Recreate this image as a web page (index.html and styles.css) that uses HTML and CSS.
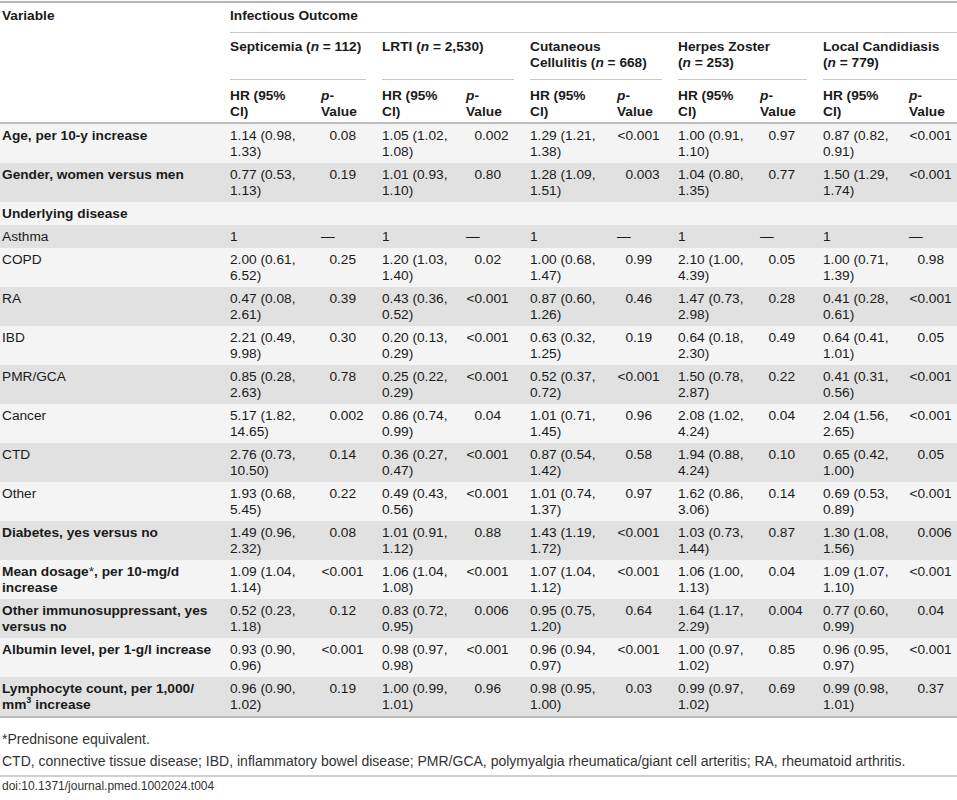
FILE: index.html
```html
<!DOCTYPE HTML>
<html>
<head>
<meta charset="utf-8">
<link rel="stylesheet" href="styles.css">
</head>
<body>

<table class="tbl">
  <colgroup>
    <col class="c-var">
    <col class="c-hr1"><col class="c-p1">
    <col class="c-hr2"><col class="c-p2">
    <col class="c-hr3"><col class="c-p3">
    <col class="c-hr4"><col class="c-p4">
    <col class="c-hr5"><col class="c-p5">
  </colgroup>
  <thead>
    <tr class="h1">
      <th class="var" rowspan="3">Variable</th>
      <th class="grp last" colspan="10">Infectious Outcome</th>
    </tr>
    <tr class="h2">
      <th class="grp" colspan="2">Septicemia (<i>n</i> = 112)</th>
      <th class="grp" colspan="2">LRTI (<i>n</i> = 2,530)</th>
      <th class="grp" colspan="2">Cutaneous<br>Cellulitis (<i>n</i> = 668)</th>
      <th class="grp" colspan="2">Herpes Zoster<br>(<i>n</i> = 253)</th>
      <th class="grp last" colspan="2">Local Candidiasis<br>(<i>n</i> = 779)</th>
    </tr>
    <tr class="h3">
      <th>HR (95%<br>CI)</th><th><i>p</i>-<br>Value</th>
      <th>HR (95%<br>CI)</th><th><i>p</i>-<br>Value</th>
      <th>HR (95%<br>CI)</th><th><i>p</i>-<br>Value</th>
      <th>HR (95%<br>CI)</th><th><i>p</i>-<br>Value</th>
      <th>HR (95%<br>CI)</th><th><i>p</i>-<br>Value</th>
    </tr>
  </thead>
  <tbody>
    <tr>
      <td class="var b">Age, per 10-y increase</td>
      <td>1.14 (0.98,<br>1.33)</td><td class="p"><span class="i">0</span>.08</td>
      <td>1.05 (1.02,<br>1.08)</td><td class="p"><span class="i">0</span>.002</td>
      <td>1.29 (1.21,<br>1.38)</td><td class="p"><span class="i">&lt;0</span>.001</td>
      <td>1.00 (0.91,<br>1.10)</td><td class="p"><span class="i">0</span>.97</td>
      <td>0.87 (0.82,<br>0.91)</td><td class="p"><span class="i">&lt;0</span>.001</td>
    </tr>
    <tr>
      <td class="var b">Gender, women versus men</td>
      <td>0.77 (0.53,<br>1.13)</td><td class="p"><span class="i">0</span>.19</td>
      <td>1.01 (0.93,<br>1.10)</td><td class="p"><span class="i">0</span>.80</td>
      <td>1.28 (1.09,<br>1.51)</td><td class="p"><span class="i">0</span>.003</td>
      <td>1.04 (0.80,<br>1.35)</td><td class="p"><span class="i">0</span>.77</td>
      <td>1.50 (1.29,<br>1.74)</td><td class="p"><span class="i">&lt;0</span>.001</td>
    </tr>
    <tr>
      <td class="var b">Underlying disease</td>
      <td></td><td></td><td></td><td></td><td></td><td></td><td></td><td></td><td></td><td></td>
    </tr>
    <tr>
      <td class="var">Asthma</td>
      <td>1</td><td class="p">—</td>
      <td>1</td><td class="p">—</td>
      <td>1</td><td class="p">—</td>
      <td>1</td><td class="p">—</td>
      <td>1</td><td class="p">—</td>
    </tr>
    <tr>
      <td class="var">COPD</td>
      <td>2.00 (0.61,<br>6.52)</td><td class="p"><span class="i">0</span>.25</td>
      <td>1.20 (1.03,<br>1.40)</td><td class="p"><span class="i">0</span>.02</td>
      <td>1.00 (0.68,<br>1.47)</td><td class="p"><span class="i">0</span>.99</td>
      <td>2.10 (1.00,<br>4.39)</td><td class="p"><span class="i">0</span>.05</td>
      <td>1.00 (0.71,<br>1.39)</td><td class="p"><span class="i">0</span>.98</td>
    </tr>
    <tr>
      <td class="var">RA</td>
      <td>0.47 (0.08,<br>2.61)</td><td class="p"><span class="i">0</span>.39</td>
      <td>0.43 (0.36,<br>0.52)</td><td class="p"><span class="i">&lt;0</span>.001</td>
      <td>0.87 (0.60,<br>1.26)</td><td class="p"><span class="i">0</span>.46</td>
      <td>1.47 (0.73,<br>2.98)</td><td class="p"><span class="i">0</span>.28</td>
      <td>0.41 (0.28,<br>0.61)</td><td class="p"><span class="i">&lt;0</span>.001</td>
    </tr>
    <tr>
      <td class="var">IBD</td>
      <td>2.21 (0.49,<br>9.98)</td><td class="p"><span class="i">0</span>.30</td>
      <td>0.20 (0.13,<br>0.29)</td><td class="p"><span class="i">&lt;0</span>.001</td>
      <td>0.63 (0.32,<br>1.25)</td><td class="p"><span class="i">0</span>.19</td>
      <td>0.64 (0.18,<br>2.30)</td><td class="p"><span class="i">0</span>.49</td>
      <td>0.64 (0.41,<br>1.01)</td><td class="p"><span class="i">0</span>.05</td>
    </tr>
    <tr>
      <td class="var">PMR/GCA</td>
      <td>0.85 (0.28,<br>2.63)</td><td class="p"><span class="i">0</span>.78</td>
      <td>0.25 (0.22,<br>0.29)</td><td class="p"><span class="i">&lt;0</span>.001</td>
      <td>0.52 (0.37,<br>0.72)</td><td class="p"><span class="i">&lt;0</span>.001</td>
      <td>1.50 (0.78,<br>2.87)</td><td class="p"><span class="i">0</span>.22</td>
      <td>0.41 (0.31,<br>0.56)</td><td class="p"><span class="i">&lt;0</span>.001</td>
    </tr>
    <tr>
      <td class="var">Cancer</td>
      <td>5.17 (1.82,<br>14.65)</td><td class="p"><span class="i">0</span>.002</td>
      <td>0.86 (0.74,<br>0.99)</td><td class="p"><span class="i">0</span>.04</td>
      <td>1.01 (0.71,<br>1.45)</td><td class="p"><span class="i">0</span>.96</td>
      <td>2.08 (1.02,<br>4.24)</td><td class="p"><span class="i">0</span>.04</td>
      <td>2.04 (1.56,<br>2.65)</td><td class="p"><span class="i">&lt;0</span>.001</td>
    </tr>
    <tr>
      <td class="var">CTD</td>
      <td>2.76 (0.73,<br>10.50)</td><td class="p"><span class="i">0</span>.14</td>
      <td>0.36 (0.27,<br>0.47)</td><td class="p"><span class="i">&lt;0</span>.001</td>
      <td>0.87 (0.54,<br>1.42)</td><td class="p"><span class="i">0</span>.58</td>
      <td>1.94 (0.88,<br>4.24)</td><td class="p"><span class="i">0</span>.10</td>
      <td>0.65 (0.42,<br>1.00)</td><td class="p"><span class="i">0</span>.05</td>
    </tr>
    <tr>
      <td class="var">Other</td>
      <td>1.93 (0.68,<br>5.45)</td><td class="p"><span class="i">0</span>.22</td>
      <td>0.49 (0.43,<br>0.56)</td><td class="p"><span class="i">&lt;0</span>.001</td>
      <td>1.01 (0.74,<br>1.37)</td><td class="p"><span class="i">0</span>.97</td>
      <td>1.62 (0.86,<br>3.06)</td><td class="p"><span class="i">0</span>.14</td>
      <td>0.69 (0.53,<br>0.89)</td><td class="p"><span class="i">&lt;0</span>.001</td>
    </tr>
    <tr>
      <td class="var b">Diabetes, yes versus no</td>
      <td>1.49 (0.96,<br>2.32)</td><td class="p"><span class="i">0</span>.08</td>
      <td>1.01 (0.91,<br>1.12)</td><td class="p"><span class="i">0</span>.88</td>
      <td>1.43 (1.19,<br>1.72)</td><td class="p"><span class="i">&lt;0</span>.001</td>
      <td>1.03 (0.73,<br>1.44)</td><td class="p"><span class="i">0</span>.87</td>
      <td>1.30 (1.08,<br>1.56)</td><td class="p"><span class="i">0</span>.006</td>
    </tr>
    <tr>
      <td class="var b">Mean dosage<span class="ast">*</span>, per 10-mg/d<br>increase</td>
      <td>1.09 (1.04,<br>1.14)</td><td class="p"><span class="i">&lt;0</span>.001</td>
      <td>1.06 (1.04,<br>1.08)</td><td class="p"><span class="i">&lt;0</span>.001</td>
      <td>1.07 (1.04,<br>1.12)</td><td class="p"><span class="i">&lt;0</span>.001</td>
      <td>1.06 (1.00,<br>1.13)</td><td class="p"><span class="i">0</span>.04</td>
      <td>1.09 (1.07,<br>1.10)</td><td class="p"><span class="i">&lt;0</span>.001</td>
    </tr>
    <tr>
      <td class="var b">Other immunosuppressant, yes<br>versus no</td>
      <td>0.52 (0.23,<br>1.18)</td><td class="p"><span class="i">0</span>.12</td>
      <td>0.83 (0.72,<br>0.95)</td><td class="p"><span class="i">0</span>.006</td>
      <td>0.95 (0.75,<br>1.20)</td><td class="p"><span class="i">0</span>.64</td>
      <td>1.64 (1.17,<br>2.29)</td><td class="p"><span class="i">0</span>.004</td>
      <td>0.77 (0.60,<br>0.99)</td><td class="p"><span class="i">0</span>.04</td>
    </tr>
    <tr>
      <td class="var b">Albumin level, per 1-g/l increase</td>
      <td>0.93 (0.90,<br>0.96)</td><td class="p"><span class="i">&lt;0</span>.001</td>
      <td>0.98 (0.97,<br>0.98)</td><td class="p"><span class="i">&lt;0</span>.001</td>
      <td>0.96 (0.94,<br>0.97)</td><td class="p"><span class="i">&lt;0</span>.001</td>
      <td>1.00 (0.97,<br>1.02)</td><td class="p"><span class="i">0</span>.85</td>
      <td>0.96 (0.95,<br>0.97)</td><td class="p"><span class="i">&lt;0</span>.001</td>
    </tr>
    <tr>
      <td class="var b">Lymphocyte count, per 1,000/<br>mm<sup>3</sup> increase</td>
      <td>0.96 (0.90,<br>1.02)</td><td class="p"><span class="i">0</span>.19</td>
      <td>1.00 (0.99,<br>1.01)</td><td class="p"><span class="i">0</span>.96</td>
      <td>0.98 (0.95,<br>1.00)</td><td class="p"><span class="i">0</span>.03</td>
      <td>0.99 (0.97,<br>1.02)</td><td class="p"><span class="i">0</span>.69</td>
      <td>0.99 (0.98,<br>1.01)</td><td class="p"><span class="i">0</span>.37</td>
    </tr>
  </tbody>
</table>

<div class="notes">
  <p class="note">*Prednisone equivalent.</p>
  <p class="note">CTD, connective tissue disease; IBD, inflammatory bowel disease; PMR/GCA, polymyalgia rheumatica/giant cell arteritis; RA, rheumatoid arthritis.</p>
</div>
<div class="doi">doi:10.1371/journal.pmed.1002024.t004</div>

</body>
</html>
```

FILE: styles.css
```css
body {
  margin: 0;
  background: #fff;
  font-family: "Liberation Sans", Arial, sans-serif;
  color: #1a1a1a;
}

.tbl {
  width: 957px;
  margin-top: 1px;
  border-collapse: collapse;
  table-layout: fixed;
  font-size: 13.7px;
  line-height: 16px;
  border-top: 2px solid #b5b5b5;
  border-bottom: 2px solid #bcbcbc;
}

.c-var { width: 230px; }
.c-hr1 { width: 91px; }
.c-p1 { width: 61px; }
.c-hr2 { width: 84px; }
.c-p2 { width: 64px; }
.c-hr3 { width: 87px; }
.c-p3 { width: 61px; }
.c-hr4 { width: 82px; }
.c-p4 { width: 63px; }
.c-hr5 { width: 86px; }
.c-p5 { width: 48px; }

th {
  font-weight: bold;
  text-align: left;
  vertical-align: top;
  padding: 0;
  white-space: nowrap;
}

td {
  padding: 4px 0 3px;
  vertical-align: top;
  white-space: nowrap;
}

.var {
  padding-left: 2px;
}

.b {
  font-weight: bold;
}

.ast {
  font-weight: normal;
}

sup {
  font-size: 9px;
  line-height: 0;
}

.h1 th {
  padding-top: 5px;
  padding-bottom: 9px;
}

.h1 th.var {
  padding-left: 2px;
  border-bottom: 2px solid #bdbdbd;
}

.h2 th {
  padding-top: 6px;
  padding-bottom: 9px;
}

.h3 th {
  padding-top: 8px;
  padding-bottom: 2px;
  border-bottom: 2px solid #bdbdbd;
}

/* underline under the grouped headings, with gaps between groups */
.grp {
  position: relative;
}

.grp::after {
  content: "";
  position: absolute;
  left: 0;
  right: 16px;
  bottom: 0;
  border-bottom: 1px solid #c8c8c8;
}

.grp.last::after {
  right: 0;
}

tbody tr:nth-child(odd) {
  background: #f4f4f4;
}

tbody tr:nth-child(even) {
  background: #e1e1e1;
}

/* p-values lined up on the decimal point */
.p .i {
  display: inline-block;
  width: 16px;
  text-align: right;
}

.notes {
  padding: 0 2px;
  font-size: 14px;
  line-height: 16px;
  color: #333;
  border-bottom: 2px solid #d0d0d0;
}

.note {
  margin: 13px 0 0;
}

.note + .note {
  margin-top: 6px;
  padding-bottom: 6px;
}

.doi {
  padding: 2px 2px 0;
  font-size: 12px;
  line-height: 14px;
  color: #333;
}
```
